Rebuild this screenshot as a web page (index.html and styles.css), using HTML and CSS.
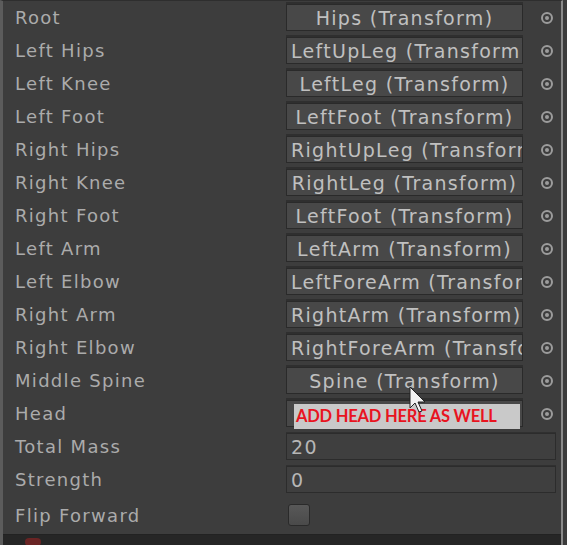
FILE: index.html
```html
<!DOCTYPE html>
<html>
<head>
<meta charset="utf-8">
<link rel="stylesheet" href="styles.css">
</head>
<body>
<div class="panel">
  <div class="grid">
    <div class="label">Root</div><div class="field center">Hips (Transform)</div><div class="pick"><span class="ring"></span></div>
    <div class="label">Left Hips</div><div class="field">LeftUpLeg (Transform)</div><div class="pick"><span class="ring"></span></div>
    <div class="label">Left Knee</div><div class="field center">LeftLeg (Transform)</div><div class="pick"><span class="ring"></span></div>
    <div class="label">Left Foot</div><div class="field center">LeftFoot (Transform)</div><div class="pick"><span class="ring"></span></div>
    <div class="label">Right Hips</div><div class="field">RightUpLeg (Transform)</div><div class="pick"><span class="ring"></span></div>
    <div class="label">Right Knee</div><div class="field center">RightLeg (Transform)</div><div class="pick"><span class="ring"></span></div>
    <div class="label">Right Foot</div><div class="field center">LeftFoot (Transform)</div><div class="pick"><span class="ring"></span></div>
    <div class="label">Left Arm</div><div class="field center">LeftArm (Transform)</div><div class="pick"><span class="ring"></span></div>
    <div class="label">Left Elbow</div><div class="field">LeftForeArm (Transform)</div><div class="pick"><span class="ring"></span></div>
    <div class="label">Right Arm</div><div class="field">RightArm (Transform)</div><div class="pick"><span class="ring"></span></div>
    <div class="label">Right Elbow</div><div class="field">RightForeArm (Transform)</div><div class="pick"><span class="ring"></span></div>
    <div class="label">Middle Spine</div><div class="field center">Spine (Transform)</div><div class="pick"><span class="ring"></span></div>
    <div class="label">Head</div><div class="field head"><span class="note">ADD HEAD HERE AS WELL</span></div><div class="pick"><span class="ring"></span></div>
    <div class="label">Total Mass</div><div class="field wide">20</div>
    <div class="label">Strength</div><div class="field wide">0</div>
    <div class="label last">Flip Forward</div><div class="checkcell"><span class="check"></span></div>
  </div>
  <div class="footer"><span class="blob"></span></div>
  <svg class="cursor" width="22" height="30" viewBox="0 0 22 30">
    <path d="M1 1 L1 22 L6 17 L10 26 L13 25 L9 16 L16 16 Z" fill="#f2f2f2" stroke="#222" stroke-width="1"/>
  </svg>
</div>
</body>
</html>
```
FILE: styles.css
```css
html, body {
  margin: 0;
  padding: 0;
  background: #3b3b3b;
}
.panel {
  position: relative;
  width: 563px;
  height: 545px;
  background: #3d3d3d;
  border-left: 3px solid #5c5c5c;
  border-right: 2px solid #8a8a8a;
  box-sizing: border-box;
  overflow: hidden;
  font-family: "DejaVu Sans", Verdana, sans-serif;
  border-top: 1px solid #2e2e2e;
}
.grid {
  display: grid;
  grid-template-columns: 272px 236px 50px;
  grid-template-rows: repeat(15, 33px) 36px;
  padding-left: 12px;
}
.label {
  display: flex;
  align-items: center;
  font-size: 18px;
  color: #ababab;
  letter-spacing: 1.3px;
  padding-bottom: 1px;
}
.label.last {
  padding-bottom: 0;
  padding-top: 2px;
}
.field {
  align-self: center;
  height: 25px;
  line-height: 27px;
  background: #484848;
  border: 1px solid #2a2a2a;
  box-shadow: 0 -2px 0 #2f2f2f;
  color: #c0c0c0;
  font-size: 19px;
  letter-spacing: 1.3px;
  white-space: nowrap;
  overflow: hidden;
  padding-left: 4px;
  box-sizing: content-box;
  margin-left: -1px;
  width: 231px;
}
.field.center {
  text-align: center;
  padding-right: 4px;
  width: 227px;
}
.field.wide {
  grid-column: 2 / 4;
  width: 264px;
  background: #3f3f3f;
  border-color: #2c2c2c;
  box-shadow: 0 -1px 0 #303030;
  color: #b6b6b6;
}
.field.head {
  position: relative;
  overflow: visible;
}
.note {
  position: absolute;
  left: 7px;
  top: 3px;
  width: 226px;
  height: 25px;
  line-height: 25px;
  background: #c9c9c9;
  color: #e8141f;
  font-family: Lato, "Liberation Sans", sans-serif;
  font-weight: bold;
  font-size: 16.5px;
  letter-spacing: -0.2px;
  padding-left: 2px;
  box-sizing: border-box;
}
.pick {
  display: flex;
  align-items: center;
  padding-left: 18px;
}
.ring {
  width: 8px;
  height: 8px;
  border-radius: 50%;
  border: 2px solid #9c9c9c;
  display: flex;
  align-items: center;
  justify-content: center;
  position: relative;
}
.ring::after {
  content: "";
  width: 4px;
  height: 4px;
  border-radius: 50%;
  background: #9c9c9c;
}
.checkcell {
  display: flex;
  align-items: center;
  padding-top: 2px;
}
.check {
  width: 20px;
  height: 20px;
  margin-left: 1px;
  border-radius: 3px;
  background: linear-gradient(#585858, #4a4a4a);
  border: 1px solid #2a2a2a;
}
.footer {
  margin-top: 2px;
  height: 12px;
  background: #262626;
  border-top: 1px solid #222;
  position: relative;
}
.blob {
  position: absolute;
  left: 22px;
  top: 3px;
  width: 16px;
  height: 8px;
  border-radius: 4px;
  background: #6a2424;
}
.cursor {
  position: absolute;
  left: 406px;
  top: 385px;
}
```
